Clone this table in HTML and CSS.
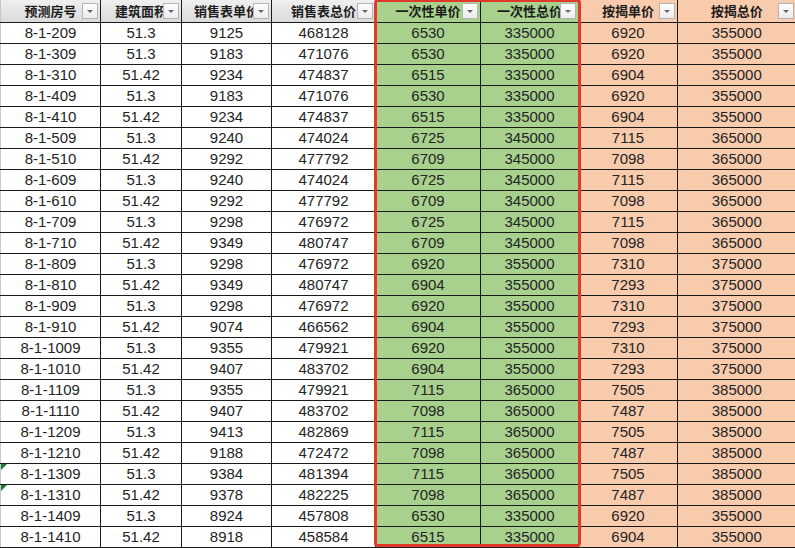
FILE: index.html
```html
<!DOCTYPE html>
<html lang="zh">
<head>
<meta charset="utf-8">
<title>房价表</title>
<link rel="stylesheet" href="styles.css">
</head>
<body>
<div class="sheet">
<table class="grid">
<colgroup>
<col class="c1"><col class="c2"><col class="c3"><col class="c4"><col class="c5"><col class="c6"><col class="c7"><col class="c8">
</colgroup>
<thead>
<tr>
<th class="gray">预测房号<span class="dd"></span></th>
<th class="gray">建筑面积<span class="dd"></span></th>
<th class="gray">销售表单价<span class="dd"></span></th>
<th class="gray">销售表总价<span class="dd"></span></th>
<th class="green">一次性单价<span class="dd"></span></th>
<th class="green">一次性总价<span class="dd"></span></th>
<th class="peach">按揭单价<span class="dd"></span></th>
<th class="peach">按揭总价<span class="dd"></span></th>
</tr>
</thead>
<tbody>
<tr><td>8-1-209</td><td>51.3</td><td>9125</td><td>468128</td><td class="green">6530</td><td class="green">335000</td><td class="peach">6920</td><td class="peach">355000</td></tr>
<tr><td>8-1-309</td><td>51.3</td><td>9183</td><td>471076</td><td class="green">6530</td><td class="green">335000</td><td class="peach">6920</td><td class="peach">355000</td></tr>
<tr><td>8-1-310</td><td>51.42</td><td>9234</td><td>474837</td><td class="green">6515</td><td class="green">335000</td><td class="peach">6904</td><td class="peach">355000</td></tr>
<tr><td>8-1-409</td><td>51.3</td><td>9183</td><td>471076</td><td class="green">6530</td><td class="green">335000</td><td class="peach">6920</td><td class="peach">355000</td></tr>
<tr><td>8-1-410</td><td>51.42</td><td>9234</td><td>474837</td><td class="green">6515</td><td class="green">335000</td><td class="peach">6904</td><td class="peach">355000</td></tr>
<tr><td>8-1-509</td><td>51.3</td><td>9240</td><td>474024</td><td class="green">6725</td><td class="green">345000</td><td class="peach">7115</td><td class="peach">365000</td></tr>
<tr><td>8-1-510</td><td>51.42</td><td>9292</td><td>477792</td><td class="green">6709</td><td class="green">345000</td><td class="peach">7098</td><td class="peach">365000</td></tr>
<tr><td>8-1-609</td><td>51.3</td><td>9240</td><td>474024</td><td class="green">6725</td><td class="green">345000</td><td class="peach">7115</td><td class="peach">365000</td></tr>
<tr><td>8-1-610</td><td>51.42</td><td>9292</td><td>477792</td><td class="green">6709</td><td class="green">345000</td><td class="peach">7098</td><td class="peach">365000</td></tr>
<tr><td>8-1-709</td><td>51.3</td><td>9298</td><td>476972</td><td class="green">6725</td><td class="green">345000</td><td class="peach">7115</td><td class="peach">365000</td></tr>
<tr><td>8-1-710</td><td>51.42</td><td>9349</td><td>480747</td><td class="green">6709</td><td class="green">345000</td><td class="peach">7098</td><td class="peach">365000</td></tr>
<tr><td>8-1-809</td><td>51.3</td><td>9298</td><td>476972</td><td class="green">6920</td><td class="green">355000</td><td class="peach">7310</td><td class="peach">375000</td></tr>
<tr><td>8-1-810</td><td>51.42</td><td>9349</td><td>480747</td><td class="green">6904</td><td class="green">355000</td><td class="peach">7293</td><td class="peach">375000</td></tr>
<tr><td>8-1-909</td><td>51.3</td><td>9298</td><td>476972</td><td class="green">6920</td><td class="green">355000</td><td class="peach">7310</td><td class="peach">375000</td></tr>
<tr><td>8-1-910</td><td>51.42</td><td>9074</td><td>466562</td><td class="green">6904</td><td class="green">355000</td><td class="peach">7293</td><td class="peach">375000</td></tr>
<tr><td>8-1-1009</td><td>51.3</td><td>9355</td><td>479921</td><td class="green">6920</td><td class="green">355000</td><td class="peach">7310</td><td class="peach">375000</td></tr>
<tr><td>8-1-1010</td><td>51.42</td><td>9407</td><td>483702</td><td class="green">6904</td><td class="green">355000</td><td class="peach">7293</td><td class="peach">375000</td></tr>
<tr><td>8-1-1109</td><td>51.3</td><td>9355</td><td>479921</td><td class="green">7115</td><td class="green">365000</td><td class="peach">7505</td><td class="peach">385000</td></tr>
<tr><td>8-1-1110</td><td>51.42</td><td>9407</td><td>483702</td><td class="green">7098</td><td class="green">365000</td><td class="peach">7487</td><td class="peach">385000</td></tr>
<tr><td>8-1-1209</td><td>51.3</td><td>9413</td><td>482869</td><td class="green">7115</td><td class="green">365000</td><td class="peach">7505</td><td class="peach">385000</td></tr>
<tr><td>8-1-1210</td><td>51.42</td><td>9188</td><td>472472</td><td class="green">7098</td><td class="green">365000</td><td class="peach">7487</td><td class="peach">385000</td></tr>
<tr><td class="flag">8-1-1309</td><td>51.3</td><td>9384</td><td>481394</td><td class="green">7115</td><td class="green">365000</td><td class="peach">7505</td><td class="peach">385000</td></tr>
<tr><td class="flag">8-1-1310</td><td>51.42</td><td>9378</td><td>482225</td><td class="green">7098</td><td class="green">365000</td><td class="peach">7487</td><td class="peach">385000</td></tr>
<tr><td>8-1-1409</td><td>51.3</td><td>8924</td><td>457808</td><td class="green">6530</td><td class="green">335000</td><td class="peach">6920</td><td class="peach">355000</td></tr>
<tr><td>8-1-1410</td><td>51.42</td><td>8918</td><td>458584</td><td class="green">6515</td><td class="green">335000</td><td class="peach">6904</td><td class="peach">355000</td></tr>
</tbody>
</table>
<div class="highlight"></div>
</div>
</body>
</html>
```
FILE: styles.css
```css
html, body {
  margin: 0;
  padding: 0;
  background: #ffffff;
}

.sheet {
  position: relative;
  width: 795px;
  height: 548px;
  overflow: hidden;
}

.grid {
  table-layout: fixed;
  border-collapse: collapse;
  width: 795px;
  font-family: "Liberation Sans", "Noto Sans CJK SC", sans-serif;
  font-size: 15px;
  color: #242424;
}

.c1 { width: 100px; }
.c2 { width: 81px; }
.c3 { width: 90px; }
.c4 { width: 104px; }
.c5 { width: 105px; }
.c6 { width: 98px; }
.c7 { width: 99px; }
.c8 { width: 118px; }

.grid th,
.grid td {
  border: 1px solid #1a1a1a;
  padding: 0;
  text-align: center;
  white-space: nowrap;
  overflow: hidden;
}

.grid thead tr { height: 22px; }
.grid tbody tr { height: 21px; }

.grid th {
  position: relative;
  border-top: none;
  font-family: "Noto Sans CJK SC", sans-serif;
  font-weight: 700;
  font-size: 13px;
  line-height: 20px;
  color: #1c1c1c;
}

.grid td {
  line-height: 19px;
}

.grid tr > :first-child { border-left: 1px solid #c8c8c8; }
.grid tr > :last-child { border-right: none; }

th.gray { background: linear-gradient(#efefef, #dadada); }
.green { background: #a9d18e; }
.peach { background: #f8cbad; }

.dd {
  position: absolute;
  right: 2px;
  top: 3px;
  width: 14px;
  height: 14px;
  border: 1px solid #b4b4b4;
  background: linear-gradient(#ffffff, #ececec);
}

.dd::after {
  content: "";
  position: absolute;
  left: 4px;
  top: 6px;
  border-left: 3px solid transparent;
  border-right: 3px solid transparent;
  border-top: 3px solid #666666;
}

.flag { position: relative; }
.flag::before {
  content: "";
  position: absolute;
  left: 0;
  top: 0;
  border-top: 6px solid #1f7a36;
  border-right: 6px solid transparent;
}

.highlight {
  position: absolute;
  left: 374px;
  top: -1px;
  width: 201px;
  height: 542px;
  border: 3px solid #e0392c;
  border-radius: 4px;
  pointer-events: none;
}
```
